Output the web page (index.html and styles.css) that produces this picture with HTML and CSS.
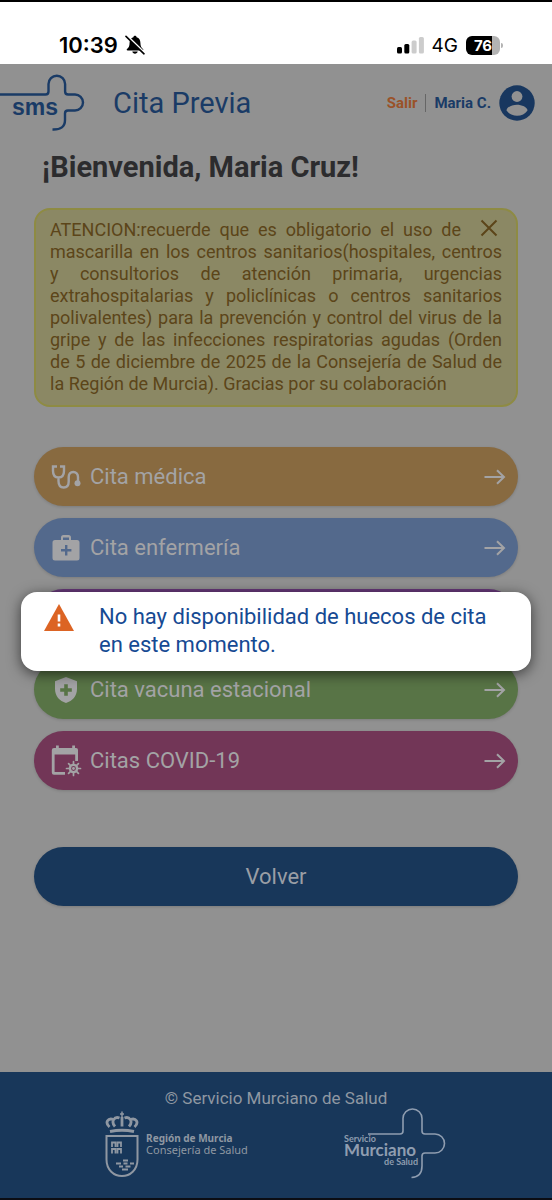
FILE: index.html
```html
<!DOCTYPE html>
<html lang="es">
<head>
<meta charset="utf-8">
<meta name="viewport" content="width=device-width, initial-scale=1">
<title>Cita Previa</title>
<link rel="stylesheet" href="styles.css">
</head>
<body>
<div class="status">
  <div class="status-left">
    <span class="time">10:39</span>
    <svg class="bell" viewBox="0 0 20 20" width="20" height="20" aria-hidden="true">
      <path d="M10 .8c-.9 0-1.5.6-1.6 1.4C5.800 3 4.600 5.200 4.600 7.700c0 3.500-1 4.800-2.600 6.200-.6.600-.3 1.500.6 1.500h14.800c.9 0 1.200-.9.600-1.500-1.600-1.400-2.600-2.700-2.600-6.200 0-2.500-1.200-4.700-3.800-5.500C11.500 1.400 10.900.8 10 .8zM7.300 16.600h5.400c-.3 1.300-1.300 2.200-2.700 2.200s-2.400-.9-2.700-2.200z"/>
      <path d="M2.200 1l17 16.400" stroke="#fff" stroke-width="2"/>
      <path d="M1 1.400l18 17.400" stroke="#000" stroke-width="1.600" stroke-linecap="round"/>
    </svg>
  </div>
  <div class="status-right">
    <svg width="27" height="18" viewBox="0 0 27 18" aria-hidden="true">
      <rect x="0" y="11" width="5" height="6.500" rx="1.500"/>
      <rect x="7.300" y="8" width="5" height="9.500" rx="1.500"/>
      <rect x="14.600" y="4.500" width="5" height="13" rx="1.500" fill="#ccc"/>
      <rect x="21.900" y="1" width="5" height="16.500" rx="1.500" fill="#ccc"/>
    </svg>
    <span class="net">4G</span>
    <span class="battery">76</span>
  </div>
</div>
<div class="app">
  <header class="header">
    <svg class="logo" viewBox="0 0 88 60" width="88" height="60" role="img" aria-label="sms">
      <path d="M0 21.500H45.500q3 0 3-3V11a8.300 8.300 0 0 1 16.600 0V18.500q0 3 3 3H75a8 8 0 0 1 0 16H68q-3 0-3 3V47q0 10-12.500 9.500" fill="none" stroke="#1a3b66" stroke-width="2.400"/>
      <text x="12" y="42" class="logo-text">sms</text>
    </svg>
    <h1 class="brand">Cita Previa</h1>
    <nav class="user">
      <a href="#" class="exit">Salir</a>
      <a href="#" class="account">Maria C.
        <svg width="36" height="36" viewBox="0 0 36 36" aria-hidden="true"><circle cx="18" cy="18" r="17.700" fill="#18375f"/><circle cx="18" cy="11.500" r="5.400" fill="#919191"/><path d="M7.500 25.500c0-3.500 6-5.800 10.500-5.800s10.500 2.300 10.500 5.800c-2.300 3.300-6 5.300-10.500 5.300s-8.200-2-10.500-5.300z" fill="#919191"/></svg>
      </a>
    </nav>
  </header>
  <main class="main">
    <h2 class="welcome">¡Bienvenida, Maria Cruz!</h2>
    <div class="notice">
      <button class="close" aria-label="Cerrar"><svg width="18" height="18" viewBox="0 0 18 18" aria-hidden="true"><path d="M1.500 1.500l15 15M16.500 1.500l-15 15" stroke="#5c4519" stroke-width="2"/></svg></button>
      <p>ATENCION:recuerde que es obligatorio el uso de mascarilla en los centros sanitarios(hospitales, centros y consultorios de atención primaria, urgencias extrahospitalarias y policlínicas o centros sanitarios polivalentes) para la prevención y control del virus de la gripe y de las infecciones respiratorias agudas (Orden de 5 de diciembre de 2025 de la Consejería de Salud de la Región de Murcia). Gracias por su colaboración</p>
    </div>
    <div class="options">
      <button class="option medica">
        <svg class="icon" viewBox="0 0 32 32" aria-hidden="true"><path d="M7 5.500H3V10c0 4 2 6.500 5.500 6.500S14 14 14 10V5.500H10M8.500 16.500V20c0 4 2 6.500 5.200 6.500s5-2.500 5-6V16c0-3 1.700-5 4.500-5s4.800 2 4.800 5v4" fill="none" stroke="currentColor" stroke-width="2.400"/><circle cx="27.500" cy="22.300" r="3" fill="currentColor"/></svg>
        <span>Cita médica</span>
        <svg class="arrow" viewBox="0 0 22 16" aria-hidden="true"><path d="M.5 8H20M13 1.200L20 8l-7 6.800"/></svg>
      </button>
      <button class="option enfermeria">
        <svg class="icon" viewBox="0 0 32 32" aria-hidden="true"><path fill="currentColor" fill-rule="evenodd" d="M5 8h6V5.500Q11 3 13.500 3h5Q21 3 21 5.500V8h6q2.500 0 2.500 2.500v15.500Q29.500 28.500 27 28.500H5Q2.500 28.500 2.500 26V10.500Q2.500 8 5 8zM13 8h6V5.500h-6zM15 13v4h-4v2.400h4v4h2.400v-4h4V17h-4v-4z"/></svg>
        <span>Cita enfermería</span>
        <svg class="arrow" viewBox="0 0 22 16" aria-hidden="true"><path d="M.5 8H20M13 1.200L20 8l-7 6.800"/></svg>
      </button>
      <button class="option otras" aria-label="Otras citas"></button>
      <button class="option vacuna">
        <svg class="icon" viewBox="0 0 32 32" aria-hidden="true"><path fill="currentColor" fill-rule="evenodd" d="M16 3L27 7.200V15c0 7-4.500 12-11 14C9.500 27 5 22 5 15V7.200zM14.200 10.200v4h-4v3.600h4v4h3.600v-4h4v-3.600h-4v-4z"/></svg>
        <span>Cita vacuna estacional</span>
        <svg class="arrow" viewBox="0 0 22 16" aria-hidden="true"><path d="M.5 8H20M13 1.200L20 8l-7 6.800"/></svg>
      </button>
      <button class="option covid">
        <svg class="icon" viewBox="0 0 32 32" aria-hidden="true"><path fill="currentColor" fill-rule="evenodd" d="M6 .5h2.800V3h13.400V.5H25V3h1q2 0 2 2v11h-2.800V9.500H4.600V27H15v2.800H4Q1.800 29.800 1.800 27.600V5.200Q1.800 3 4 3h2z"/><circle cx="23.500" cy="23.500" r="3.600" fill="none" stroke="currentColor" stroke-width="2.400"/><path d="M23.500 19v-2.500M23.500 28v2.500M19 23.500h-2.500M28 23.500h2.500M20.300 20.300l-1.700-1.700M26.700 20.300l1.700-1.700M20.300 26.700l-1.700 1.700M26.700 26.700l1.700 1.700" stroke="currentColor" stroke-width="1.700" stroke-linecap="round"/><circle cx="23.500" cy="23.500" r="1.400" fill="currentColor"/></svg>
        <span>Citas COVID-19</span>
        <svg class="arrow" viewBox="0 0 22 16" aria-hidden="true"><path d="M.5 8H20M13 1.200L20 8l-7 6.800"/></svg>
      </button>
    </div>
    <button class="back">Volver</button>
  </main>
  <footer class="footer">
    <p class="copy">© Servicio Murciano de Salud</p>
    <div class="logos">
      <div class="region">
        <svg width="34" height="68" viewBox="0 0 34 68" fill="none" stroke="#8f97a2" aria-hidden="true">
          <path d="M1.500 26H32.500V49.500C32.500 60 25 66 17 66S1.500 60 1.500 49.500z" stroke-width="2"/>
          <path d="M5 21.500q12-2.500 24 0" stroke-width="3"/>
          <path d="M4.500 17C-.5 12.500 3 7.500 8.500 9.500M10 16.500C5.500 11.500 9.500 6 14.500 8M29.500 17c5-4.500 1.500-9.500-4-7.500M24 16.500c4.500-5 .5-10.500-4.500-8.500M17 16.500V7" stroke-width="2.800"/>
          <path d="M17 1.500V7M15 4h4" stroke-width="1.500"/>
          <path d="M7 37v-4.500h3.500V37M12.500 37v-4.500H16V37M7 43.500V39h3.500v4.500M12.500 43.500V39H16v4.500" stroke-width="1.800"/>
          <path d="M18 50.500h5M11 53.500h5m2.500 0h4m2.500 0h4M14 56.500h4m2.500 0h5M17 59.500h6" stroke-width="1.800"/>
        </svg>
        <p class="region-name"><b>Región de Murcia</b><span>Consejería de Salud</span></p>
      </div>
      <svg width="104" height="72" viewBox="0 0 104 72" role="img" aria-label="Servicio Murciano de Salud">
        <path d="M25 26H57q3 0 3-3V10.500a9.500 9.500 0 0 1 19 0V23q0 3 3 3H92a9.500 9.500 0 0 1 0 19H82q-3 0-3 3V58q0 11-10.500 11.500" fill="none" stroke="#8f9db0" stroke-width="1.600"/>
        <text x="1" y="34" class="sms-small">Servicio</text>
        <text x="1" y="48" class="sms-big">Murciano</text>
        <text x="75" y="57" text-anchor="end" class="sms-small">de Salud</text>
      </svg>
    </div>
  </footer>
  <div class="overlay">
    <div class="alert" role="alertdialog" aria-describedby="msg">
      <svg width="30" height="27" viewBox="0 0 30 27" aria-hidden="true"><path d="M15 0L30 27H0z" fill="#dc6424"/><path d="M15 10.500v7M15 19.500v3" stroke="#fff" stroke-width="2.600"/></svg>
      <p id="msg">No hay disponibilidad de huecos de cita en este momento.</p>
    </div>
  </div>
</div>
</body>
</html>
```
FILE: styles.css
```css
* { box-sizing: border-box; }

body {
  margin: 0;
  min-height: 100vh;
  display: flex;
  flex-direction: column;
  border-top: 2px solid #000;
  border-bottom: 2px solid #0b0d14;
  font-family: Roboto, sans-serif;
  background: #919191;
}

h1, h2, p { margin: 0; }
a { text-decoration: none; color: inherit; }
button { font: inherit; border: 0; cursor: pointer; }

.status {
  height: 62px;
  padding: 24px 52px 0 59px;
  display: flex;
  justify-content: space-between;
  align-items: flex-start;
  background: #fff;
  color: #000;
  font-family: Inter, sans-serif;
}
.status-left, .status-right { display: flex; align-items: center; height: 38px; }
.status-left { gap: 7px; }
.status-right { gap: 8px; }
.time { font-size: 22px; font-weight: 600; }
.net { font-size: 19px; }
.battery {
  position: relative;
  width: 34px;
  height: 19px;
  line-height: 19px;
  border-radius: 6px;
  background: linear-gradient(90deg, #000 76%, #b3b3b3 76%);
  color: #fff;
  font-size: 15px;
  font-weight: 700;
  text-align: center;
}
.battery::after {
  content: "";
  position: absolute;
  left: 100%;
  top: 7px;
  margin-left: 1px;
  width: 2px;
  height: 5px;
  border-radius: 0 2px 2px 0;
  background: #b3b3b3;
}

.app {
  position: relative;
  flex: 1;
  display: flex;
  flex-direction: column;
}

.header {
  display: flex;
  align-items: center;
  height: 78px;
  padding-right: 17px;
}
.logo-text { font: 700 23px "Liberation Sans", Arial, sans-serif; fill: #1a3b66; }
.brand {
  margin-left: 25px;
  font-size: 29px;
  font-weight: 400;
  color: #1a3b66;
}
.user {
  margin-left: auto;
  display: flex;
  align-items: center;
  font-size: 15px;
  font-weight: 700;
}
.exit { color: #9a5228; padding-right: 8px; border-right: 1px solid #666; }
.account { display: flex; align-items: center; gap: 8px; padding-left: 8px; color: #1a3b66; }

.main {
  flex: 1;
  display: flex;
  flex-direction: column;
  padding: 8px 34px 0;
}
.welcome {
  padding-left: 8px;
  font-size: 29px;
  line-height: 34px;
  font-weight: 700;
  color: #2c2c2e;
}
.notice {
  margin-top: 24px;
  padding: 9px 14px 10px;
  border: 2px solid #8e8b43;
  border-radius: 16px;
  background: #8b8864;
  color: #5c4519;
  font-size: 18px;
  line-height: 22px;
  text-align: justify;
}
.close {
  float: right;
  width: 41px;
  height: 20px;
  padding: 0 4px 0 0;
  display: flex;
  justify-content: flex-end;
  background: none;
}

.options { margin-top: 40px; display: flex; flex-direction: column; gap: 12px; }
.option {
  height: 59px;
  padding: 0 12px 0 16px;
  display: flex;
  align-items: center;
  gap: 8px;
  border-radius: 30px;
  color: #a3a3a5;
  font-size: 22px;
  text-align: left;
  box-shadow: 0 1px 3px rgba(0, 0, 0, 0.15);
}
.icon { width: 32px; height: 32px; }
.arrow {
  width: 22px;
  height: 16px;
  margin-left: auto;
  fill: none;
  stroke: currentColor;
  stroke-width: 2;
}
.medica { background: #886a40; }
.enfermeria { background: #53698c; }
.otras { background: #67397a; }
.vacuna { background: #587446; }
.covid { background: #723657; }

.back {
  margin-top: 57px;
  height: 59px;
  border-radius: 30px;
  background: #18375a;
  color: #9a9ea5;
  font-size: 22px;
  box-shadow: 0 1px 3px rgba(0, 0, 0, 0.15);
}

.footer {
  height: 126px;
  padding-top: 16px;
  background: #18375a;
  color: #8f97a2;
}
.copy { text-align: center; font-size: 17px; line-height: 20px; }
.logos { display: flex; justify-content: center; gap: 95px; }
.region { display: flex; align-items: center; gap: 7px; }
.region-name {
  display: flex;
  flex-direction: column;
  font: 11px/12px "Noto Sans", sans-serif;
}
.region-name b { font-size: 10px; }
.sms-small { font: 700 9px Lato, sans-serif; fill: #8f9db0; }
.sms-big { font: 700 17px Lato, sans-serif; fill: #8f9db0; }

.overlay {
  position: absolute;
  inset: 0;
  display: flex;
  align-items: center;
  padding: 0 21px;
}
.alert {
  flex: 1;
  display: flex;
  align-items: flex-start;
  gap: 25px;
  padding: 11px 24px 12px 23px;
  border-radius: 16px;
  background: #fff;
  box-shadow: 0 3px 14px rgba(0, 0, 0, 0.6);
  color: #164a93;
  font-size: 22px;
  line-height: 28px;
}
.alert svg { flex: none; margin-top: 1px; }
```
